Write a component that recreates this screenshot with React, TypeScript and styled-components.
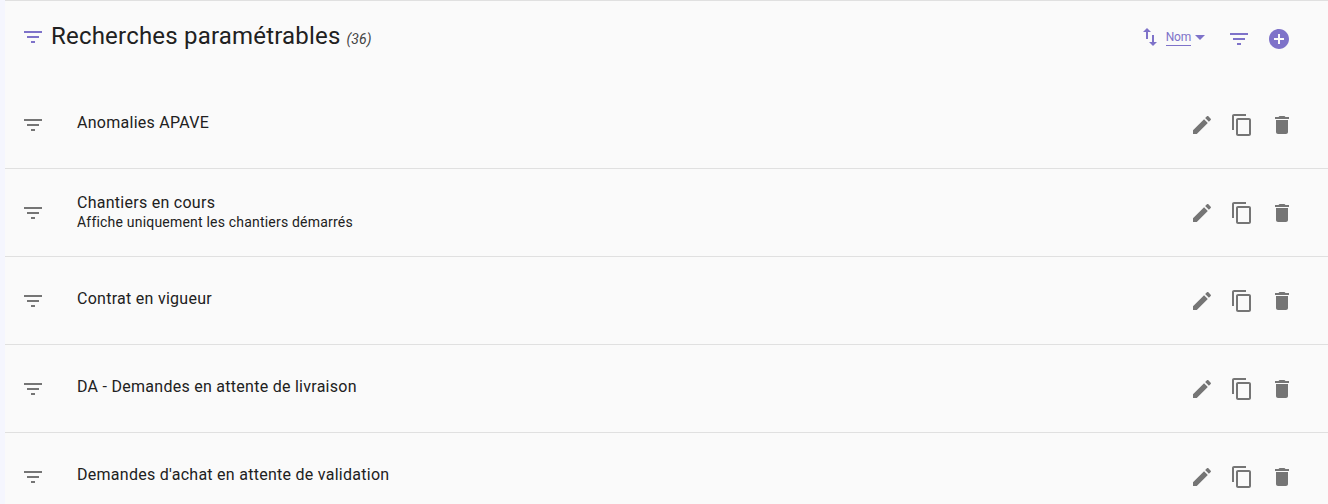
import { createGlobalStyle } from "styled-components";
import styled from "styled-components";

const GlobalStyle = createGlobalStyle`
  html, body {
    margin: 0;
    padding: 0;
    height: 504px;
    overflow: hidden;
    background: #f5f6fe;
    font-family: Roboto, "Liberation Sans", sans-serif;
  }
`;

const PATHS = {
  filter: "M10 18h4v-2h-4v2zM3 6v2h18V6H3zm3 7h12v-2H6v2z",
  edit: "M3 17.25V21h3.75L17.81 9.94l-3.75-3.75L3 17.25zM20.71 7.04c.39-.39.39-1.02 0-1.41l-2.34-2.34c-.39-.39-1.02-.39-1.41 0l-1.83 1.83 3.75 3.75 1.83-1.83z",
  copy: "M16 1H4c-1.1 0-2 .9-2 2v14h2V3h12V1zm3 4H8c-1.1 0-2 .9-2 2v14c0 1.1.9 2 2 2h11c1.1 0 2-.9 2-2V7c0-1.1-.9-2-2-2zm0 16H8V7h11v14z",
  trash: "M6 19c0 1.1.9 2 2 2h8c1.1 0 2-.9 2-2V7H6v12zM19 4h-3.5l-1-1h-5l-1 1H5v2h14V4z",
  add: "M12 2C6.48 2 2 6.48 2 12s4.48 10 10 10 10-4.48 10-10S17.52 2 12 2zm5 11h-4v4h-2v-4H7v-2h4V7h2v4h4v2z",
  swap: "M16 17.01V10h-2v7.01h-3L15 21l4-3.99h-3zM9 3L5 6.99h3V14h2V6.99h3L9 3z",
  caret: "M7 10l5 5 5-5z",
};

type IconProps = {
  name: keyof typeof PATHS;
  color?: string;
};

const Icon = ({ name, color = "#757575" }: IconProps) => (
  <Svg viewBox="0 0 24 24" fill={color}>
    <path d={PATHS[name]} />
  </Svg>
);

const ROWS = [
  { id: 1, title: "Anomalies APAVE" },
  {
    id: 2,
    title: "Chantiers en cours",
    subtitle: "Affiche uniquement les chantiers démarrés",
  },
  { id: 3, title: "Contrat en vigueur" },
  { id: 4, title: "DA - Demandes en attente de livraison" },
  { id: 5, title: "Demandes d'achat en attente de validation" },
];

const PURPLE = "#7e72c9";

const App = () => {
  return (
    <Page>
      <GlobalStyle />
      <Header>
        <TitleIcon>
          <Icon name="filter" color={PURPLE} />
        </TitleIcon>
        <Title>Recherches paramétrables</Title>
        <Count>(36)</Count>
        <Tools>
          <SortIcon>
            <Icon name="swap" color={PURPLE} />
          </SortIcon>
          <SortLabel>Nom</SortLabel>
          <Caret>
            <Icon name="caret" color={PURPLE} />
          </Caret>
          <ToolButton>
            <Icon name="filter" color={PURPLE} />
          </ToolButton>
          <ToolButton>
            <Icon name="add" color={PURPLE} />
          </ToolButton>
        </Tools>
      </Header>
      <List>
        {ROWS.map((row) => (
          <Row key={row.id}>
            <RowIcon>
              <Icon name="filter" />
            </RowIcon>
            <Infos $twoLines={!!row.subtitle}>
              <RowTitle>{row.title}</RowTitle>
              {row.subtitle && <RowSubtitle>{row.subtitle}</RowSubtitle>}
            </Infos>
            <Actions>
              <ActionButton>
                <Icon name="edit" />
              </ActionButton>
              <ActionButton>
                <Icon name="copy" />
              </ActionButton>
              <ActionButton>
                <Icon name="trash" />
              </ActionButton>
            </Actions>
          </Row>
        ))}
      </List>
    </Page>
  );
};

const Svg = styled.svg`
  display: block;
  width: 24px;
  height: 24px;
`;

const Page = styled.main`
  height: 504px;
  margin-left: 5px;
  background: #fafafa;
  border-top: 1px solid #e0e0e0;
  box-sizing: border-box;
  overflow: hidden;
`;

const Header = styled.header`
  display: flex;
  align-items: center;
  height: 80px;
  padding: 0 29px 9px 16px;
  box-sizing: border-box;
`;

const TitleIcon = styled.div`
  margin-right: 6px;
`;

const Title = styled.h1`
  margin: -2px 0 0;
  font-size: 24px;
  line-height: 32px;
  font-weight: 400;
  letter-spacing: 0.2px;
  color: #212121;
`;

const Count = styled.span`
  margin: 4px 0 0 6px;
  font-size: 14px;
  font-style: italic;
  letter-spacing: 0.1px;
  color: #424242;
`;

const Tools = styled.div`
  display: flex;
  align-items: center;
  margin-left: auto;
`;

const SortIcon = styled.div`
  margin: 1px 4px 0 0;
`;

const SortLabel = styled.span`
  margin-top: 2px;
  font-size: 12px;
  line-height: 15px;
  letter-spacing: -0.2px;
  color: ${PURPLE};
  border-bottom: 1px solid ${PURPLE};
`;

const Caret = styled.div`
  margin: 0 7px 0 -3px;
`;

const ToolButton = styled.div`
  display: flex;
  justify-content: center;
  width: 40px;
  margin-top: 5px;
`;

const List = styled.ul`
  margin: 0;
  padding: 0;
  list-style: none;
`;

const Row = styled.li`
  display: flex;
  align-items: center;
  height: 88px;
  padding: 0 26px 0 16px;
  box-sizing: border-box;
  border-bottom: 1px solid #e0e0e0;
`;

const RowIcon = styled.div`
  width: 56px;
  flex-shrink: 0;
`;

const Infos = styled.div<{ $twoLines: boolean }>`
  flex: 1;
  margin-top: ${({ $twoLines }) => ($twoLines ? "-1px" : "-4px")};
`;

const RowTitle = styled.div`
  font-size: 16px;
  line-height: 20px;
  letter-spacing: 0.27px;
  color: #212121;
`;

const RowSubtitle = styled.div`
  margin-top: -1px;
  font-size: 14px;
  line-height: 20px;
  letter-spacing: 0.2px;
  color: #212121;
`;

const Actions = styled.div`
  display: flex;
`;

const ActionButton = styled.div`
  display: flex;
  justify-content: center;
  width: 40px;
`;

export default App;
